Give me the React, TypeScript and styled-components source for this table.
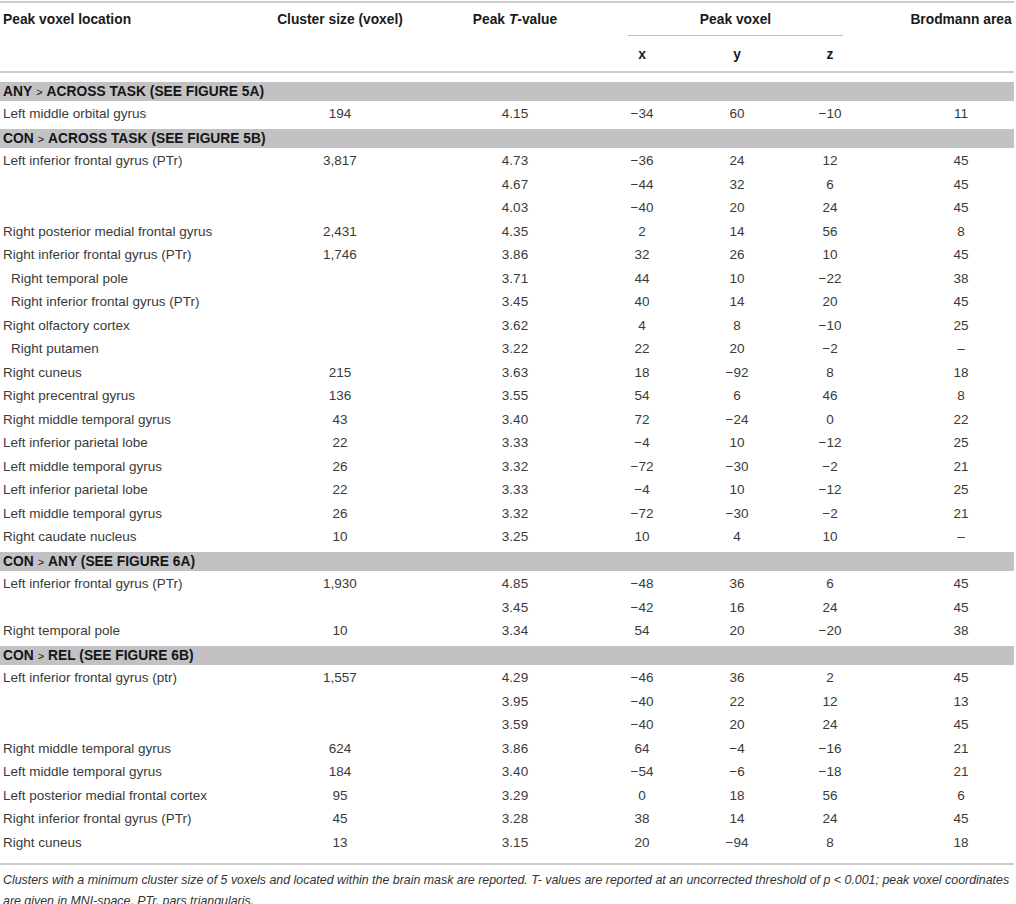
import React from "react";
import styled, { createGlobalStyle } from "styled-components";

const GlobalStyle = createGlobalStyle`
  html, body { margin: 0; padding: 0; background: #ffffff; }
  body { font-family: "Liberation Sans", Arial, Helvetica, sans-serif; }
`;

const COLS = "212px 256px 94px 160px 30px 156px 106px";

const Page = styled.div`
  width: 1016px;
  padding-top: 1px;
`;

const Table = styled.div`
  width: 1014px;
  border-top: 2px solid #cccccc;
  border-bottom: 2px solid #cccccc;
`;

const Head = styled.div`
  display: grid;
  grid-template-columns: ${COLS};
  grid-template-rows: 33px 35px;
  border-bottom: 2px solid #cccccc;
  font-weight: 700;
  font-size: 13.8px;
  color: #1a1a1a;
`;

const HeadCell = styled.div<{ $col: string; $row: string; $left?: boolean; $pt?: number }>`
  grid-column: ${(p) => p.$col};
  grid-row: ${(p) => p.$row};
  align-self: ${(p) => (p.$pt ? "start" : "center")};
  padding-top: ${(p) => (p.$pt ? `${p.$pt}px` : "0")};
  padding-left: ${(p) => (p.$left ? "3px" : "0")};
  text-align: ${(p) => (p.$left ? "left" : "center")};
  white-space: nowrap;
  line-height: 17px;
`;

const SpanHead = styled.div`
  grid-column: 4 / 7;
  grid-row: 1;
  margin: 0 65px 0 66px;
  align-self: stretch;
  display: flex;
  align-items: center;
  justify-content: center;
  border-bottom: 1px solid #bdbdbd;
  line-height: 17px;
`;

const Body = styled.div`
  padding: 5.5px 0 9px;
`;

const Row = styled.div`
  display: grid;
  grid-template-columns: ${COLS};
  height: 23.5px;
  align-items: center;
  font-size: 13.5px;
  color: #3a3a3a;
  line-height: 17px;
`;

const Cell = styled.div<{ $left?: boolean; $indent?: boolean }>`
  text-align: ${(p) => (p.$left ? "left" : "center")};
  padding-left: ${(p) => (p.$left ? (p.$indent ? "11px" : "3px") : "0")};
  white-space: nowrap;
`;

const BandRow = styled.div`
  height: 23.5px;
  box-sizing: border-box;
  padding: 3.5px 0 1.5px;
`;

const Band = styled.div`
  height: 100%;
  background: #c2c2c4;
  display: flex;
  align-items: center;
  padding-left: 3px;
  font-size: 13.8px;
  font-weight: 700;
  color: #151515;
  white-space: nowrap;
`;

const Gt = styled.span`
  font-weight: 400;
  font-size: 11px;
  margin: 0 4px;
  position: relative;
  top: 1px;
`;

const Foot = styled.p`
  margin: 5px 0 0;
  width: 1014px;
  padding-left: 3px;
  box-sizing: border-box;
  font-size: 12.4px;
  line-height: 21px;
  font-style: italic;
  color: #333333;
`;

type DataRow = { kind: "row"; c: string[]; indent?: boolean };
type SecRow = { kind: "band"; a: string; b: string };
type Item = DataRow | SecRow;

const M = "\u2212";
const D = "\u2013";

const r = (c: string[], indent?: boolean): DataRow => ({ kind: "row", c, indent });
const s = (a: string, b: string): SecRow => ({ kind: "band", a, b });

const items: Item[] = [
  s("ANY", "ACROSS TASK (SEE FIGURE 5A)"),
  r(["Left middle orbital gyrus", "194", "4.15", `${M}34`, "60", `${M}10`, "11"]),
  s("CON", "ACROSS TASK (SEE FIGURE 5B)"),
  r(["Left inferior frontal gyrus (PTr)", "3,817", "4.73", `${M}36`, "24", "12", "45"]),
  r(["", "", "4.67", `${M}44`, "32", "6", "45"]),
  r(["", "", "4.03", `${M}40`, "20", "24", "45"]),
  r(["Right posterior medial frontal gyrus", "2,431", "4.35", "2", "14", "56", "8"]),
  r(["Right inferior frontal gyrus (PTr)", "1,746", "3.86", "32", "26", "10", "45"]),
  r(["Right temporal pole", "", "3.71", "44", "10", `${M}22`, "38"], true),
  r(["Right inferior frontal gyrus (PTr)", "", "3.45", "40", "14", "20", "45"], true),
  r(["Right olfactory cortex", "", "3.62", "4", "8", `${M}10`, "25"]),
  r(["Right putamen", "", "3.22", "22", "20", `${M}2`, D], true),
  r(["Right cuneus", "215", "3.63", "18", `${M}92`, "8", "18"]),
  r(["Right precentral gyrus", "136", "3.55", "54", "6", "46", "8"]),
  r(["Right middle temporal gyrus", "43", "3.40", "72", `${M}24`, "0", "22"]),
  r(["Left inferior parietal lobe", "22", "3.33", `${M}4`, "10", `${M}12`, "25"]),
  r(["Left middle temporal gyrus", "26", "3.32", `${M}72`, `${M}30`, `${M}2`, "21"]),
  r(["Left inferior parietal lobe", "22", "3.33", `${M}4`, "10", `${M}12`, "25"]),
  r(["Left middle temporal gyrus", "26", "3.32", `${M}72`, `${M}30`, `${M}2`, "21"]),
  r(["Right caudate nucleus", "10", "3.25", "10", "4", "10", D]),
  s("CON", "ANY (SEE FIGURE 6A)"),
  r(["Left inferior frontal gyrus (PTr)", "1,930", "4.85", `${M}48`, "36", "6", "45"]),
  r(["", "", "3.45", `${M}42`, "16", "24", "45"]),
  r(["Right temporal pole", "10", "3.34", "54", "20", `${M}20`, "38"]),
  s("CON", "REL (SEE FIGURE 6B)"),
  r(["Left inferior frontal gyrus (ptr)", "1,557", "4.29", `${M}46`, "36", "2", "45"]),
  r(["", "", "3.95", `${M}40`, "22", "12", "13"]),
  r(["", "", "3.59", `${M}40`, "20", "24", "45"]),
  r(["Right middle temporal gyrus", "624", "3.86", "64", `${M}4`, `${M}16`, "21"]),
  r(["Left middle temporal gyrus", "184", "3.40", `${M}54`, `${M}6`, `${M}18`, "21"]),
  r(["Left posterior medial frontal cortex", "95", "3.29", "0", "18", "56", "6"]),
  r(["Right inferior frontal gyrus (PTr)", "45", "3.28", "38", "14", "24", "45"]),
  r(["Right cuneus", "13", "3.15", "20", `${M}94`, "8", "18"]),
];

export default function App() {
  return (
    <Page>
      <GlobalStyle />
      <Table>
        <Head>
          <HeadCell $col="1" $row="1" $left>Peak voxel location</HeadCell>
          <HeadCell $col="2" $row="1">Cluster size (voxel)</HeadCell>
          <HeadCell $col="3" $row="1">
            Peak <i>T</i>-value
          </HeadCell>
          <SpanHead>Peak voxel</SpanHead>
          <HeadCell $col="7" $row="1">Brodmann area</HeadCell>
          <HeadCell $col="4" $row="2" $pt={10}>x</HeadCell>
          <HeadCell $col="5" $row="2" $pt={10}>y</HeadCell>
          <HeadCell $col="6" $row="2" $pt={10}>z</HeadCell>
        </Head>
        <Body>
          {items.map((it, i) =>
            it.kind === "band" ? (
              <BandRow key={i}>
                <Band>
                  {it.a}
                  <Gt>&gt;</Gt>
                  {it.b}
                </Band>
              </BandRow>
            ) : (
              <Row key={i}>
                {it.c.map((v, j) => (
                  <Cell key={j} $left={j === 0} $indent={j === 0 && it.indent}>
                    {v}
                  </Cell>
                ))}
              </Row>
            )
          )}
        </Body>
      </Table>
      <Foot>
        Clusters with a minimum cluster size of 5 voxels and located within the brain mask are reported. T- values are
        reported at an uncorrected threshold of p &lt; 0.001; peak voxel coordinates are given in MNI-space. PTr, pars
        triangularis.
      </Foot>
    </Page>
  );
}
